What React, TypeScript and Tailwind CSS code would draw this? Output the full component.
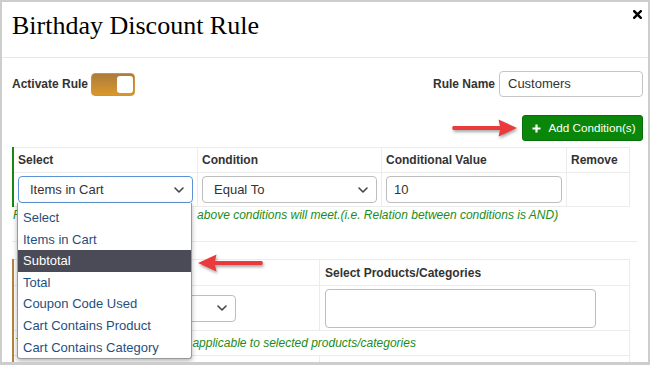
import React from 'react';

// ─── Small drawings ───────────────────────────────────────────────────────────

const Chevron: React.FC = () => (
  <svg width="10" height="6" viewBox="0 0 10 6" className="shrink-0">
    <path d="M1 1l4 4 4-4" fill="none" stroke="#444" strokeWidth="1.6" strokeLinecap="round" strokeLinejoin="round" />
  </svg>
);

const RedArrow: React.FC<{ dir: 'left' | 'right'; className: string }> = ({ dir, className }) => (
  <svg
    width="68"
    height="20"
    viewBox="0 0 68 20"
    className={className}
    style={{ filter: 'drop-shadow(1px 2px 1.5px rgba(0,0,0,0.35))' }}
  >
    <g transform={dir === 'left' ? 'translate(68 0) scale(-1 1)' : undefined}>
      <path d="M2 8 L49 8 L47.5 1.5 L66 10 L47.5 18.5 L49 12 L2 12 Q0.5 10 2 8 Z" fill="#ea3a3c" />
    </g>
  </svg>
);

// ─── Table bits ───────────────────────────────────────────────────────────────

const HeadCell: React.FC<{ children?: React.ReactNode }> = ({ children }) => (
  <div className="h-[25px] px-[4px] flex items-center border-r border-b border-[#ececec] text-[12px] font-bold text-[#333]">
    {children}
  </div>
);

const FakeSelect: React.FC<{ value: string; focused?: boolean; className?: string }> = ({ value, focused, className = '' }) => (
  <div
    className={`h-[27px] rounded-[4px] border flex items-center justify-between pl-[11px] pr-[8px] text-[13px] text-[#333] bg-white ${
      focused ? 'border-[#5b93d6]' : 'border-[#bdbdbd]'
    } ${className}`}
  >
    <span>{value}</span>
    <Chevron />
  </div>
);

const OPTIONS = [
  'Select',
  'Items in Cart',
  'Subtotal',
  'Total',
  'Coupon Code Used',
  'Cart Contains Product',
  'Cart Contains Category',
];

export default function App() {
  return (
    <div className="relative w-[650px] h-[365px] overflow-hidden bg-white border-2 border-b-[3px] border-[#cdcdcd] font-['Liberation_Sans',Arial,sans-serif] text-[#333]">
      {/* Header */}
      <div className="h-[56px] pt-[8px] pl-[10px] border-b border-[#e8e8e8]">
        <h1 className="font-['Liberation_Serif','Times_New_Roman',serif] text-[26px] leading-[32px] text-black">
          Birthday Discount Rule
        </h1>
      </div>
      <svg width="9" height="9" viewBox="0 0 9 9" className="absolute top-[8px] right-[6px]">
        <path d="M1.2 1.2l6.6 6.6M7.8 1.2L1.2 7.8" stroke="#000" strokeWidth="2.4" strokeLinecap="square" />
      </svg>

      {/* Body */}
      <div className="pt-[13px] pl-[10px] pr-[5px]">
        <div className="flex items-center justify-between h-[26px]">
          <div className="flex items-center">
            <span className="text-[12px] font-bold">Activate Rule</span>
            <div className="relative ml-[3px] w-[44px] h-[23px] rounded-[4px] bg-linear-to-b from-[#ad7b3b] to-[#da982a] border border-[#cc9440]">
              <div className="absolute right-[1px] top-[2px] w-[16px] h-[17px] rounded-[3px] bg-white" />
            </div>
          </div>
          <div className="flex items-center">
            <span className="text-[12px] font-bold">Rule Name</span>
            <div className="ml-[4px] w-[144px] h-[26px] rounded-[4px] border border-[#c4c4c4] flex items-center pl-[8px] text-[13px] text-[#333]">
              Customers
            </div>
          </div>
        </div>

        <div className="mt-[18px] flex justify-end">
          <button className="h-[26px] w-[121px] rounded-[3px] bg-[#0a870a] border border-[#07700a] flex items-center justify-center gap-[7px] pl-[3px] text-white text-[11.7px]">
            <svg width="9" height="9" viewBox="0 0 9 9">
              <path d="M4.5 0.5v8M0.5 4.5h8" stroke="#fff" strokeWidth="2.2" />
            </svg>
            Add Condition(s)
          </button>
        </div>

        {/* Conditions table */}
        <div className="mt-[6px] mr-[13px] border-l-2 border-[#128a12]">
          <div className="grid grid-cols-[184px_184px_185px_63px] border-t border-[#ececec]">
            <HeadCell>Select</HeadCell>
            <HeadCell>Condition</HeadCell>
            <HeadCell>Conditional Value</HeadCell>
            <HeadCell>Remove</HeadCell>
            <div className="h-[34px] px-[4px] pt-[3px] border-r border-b border-[#ececec]">
              <FakeSelect value="Items in Cart" focused />
            </div>
            <div className="h-[34px] px-[4px] pt-[3px] border-r border-b border-[#ececec]">
              <FakeSelect value="Equal To" />
            </div>
            <div className="h-[34px] px-[4px] pt-[3px] border-r border-b border-[#ececec]">
              <div className="h-[27px] rounded-[4px] border border-[#bdbdbd] flex items-center pl-[7px] text-[13px]">10</div>
            </div>
            <div className="h-[34px] border-r border-b border-[#ececec]" />
          </div>
        </div>
        <p className="pt-[1px] pl-[1px] text-[12px] leading-[14px] italic text-[#1b8c1b] whitespace-nowrap">
          For this rule to get applied, all the{'\u00a0'} above conditions will meet.(i.e. Relation between conditions is AND)
        </p>
        <div className="mt-[19px] mr-[6px] border-t border-[#ececec]" />

        {/* Discount table */}
        <div className="mt-[17px] mr-[13px] border-l-2 border-[#b5843f]">
          <div className="grid grid-cols-[306px_310px] border-t border-[#ececec]">
            <div className="h-[26px] px-[4px] flex items-center border-r border-b border-[#ececec] text-[12px] font-bold">
              Discount Type
            </div>
            <div className="h-[26px] px-[5px] flex items-center border-r border-b border-[#ececec] text-[12px] font-bold">
              Select Products/Categories
            </div>
            <div className="h-[45px] px-[4px] flex items-center border-r border-b border-[#ececec]">
              <FakeSelect value="Percentage" className="w-[218px]" />
            </div>
            <div className="h-[45px] px-[5px] flex items-center border-r border-b border-[#ececec]">
              <div className="w-[271px] h-[39px] rounded-[4px] border border-[#bdbdbd]" />
            </div>
            <div className="col-span-2 h-[25px] pl-[1px] flex items-center border-r border-b border-[#ececec] text-[12px] italic text-[#1b8c1b] whitespace-nowrap">
              The discount amount will only be applicable to selected products/categories
            </div>
            <div className="h-[30px] border-r border-[#ececec]" />
            <div className="h-[30px] border-r border-[#ececec]" />
          </div>
        </div>
      </div>

      {/* Open dropdown list */}
      <div className="absolute left-[15px] top-[201px] w-[175px] h-[156px] pt-[4px] bg-white border border-t-0 border-[#9a9a9a] rounded-b-[3px] shadow-[0_2px_5px_rgba(0,0,0,0.3)]">
        {OPTIONS.map((opt) => (
          <div
            key={opt}
            className={`h-[21.6px] pl-[5px] flex items-center text-[13px] ${
              opt === 'Subtotal' ? 'bg-[#4b4b57] text-white' : 'text-[#1f4f80]'
            }`}
          >
            {opt}
          </div>
        ))}
      </div>

      {/* Annotation arrows */}
      <RedArrow dir="right" className="absolute left-[449px] top-[116px]" />
      <RedArrow dir="left" className="absolute left-[194px] top-[251px]" />
    </div>
  );
}
